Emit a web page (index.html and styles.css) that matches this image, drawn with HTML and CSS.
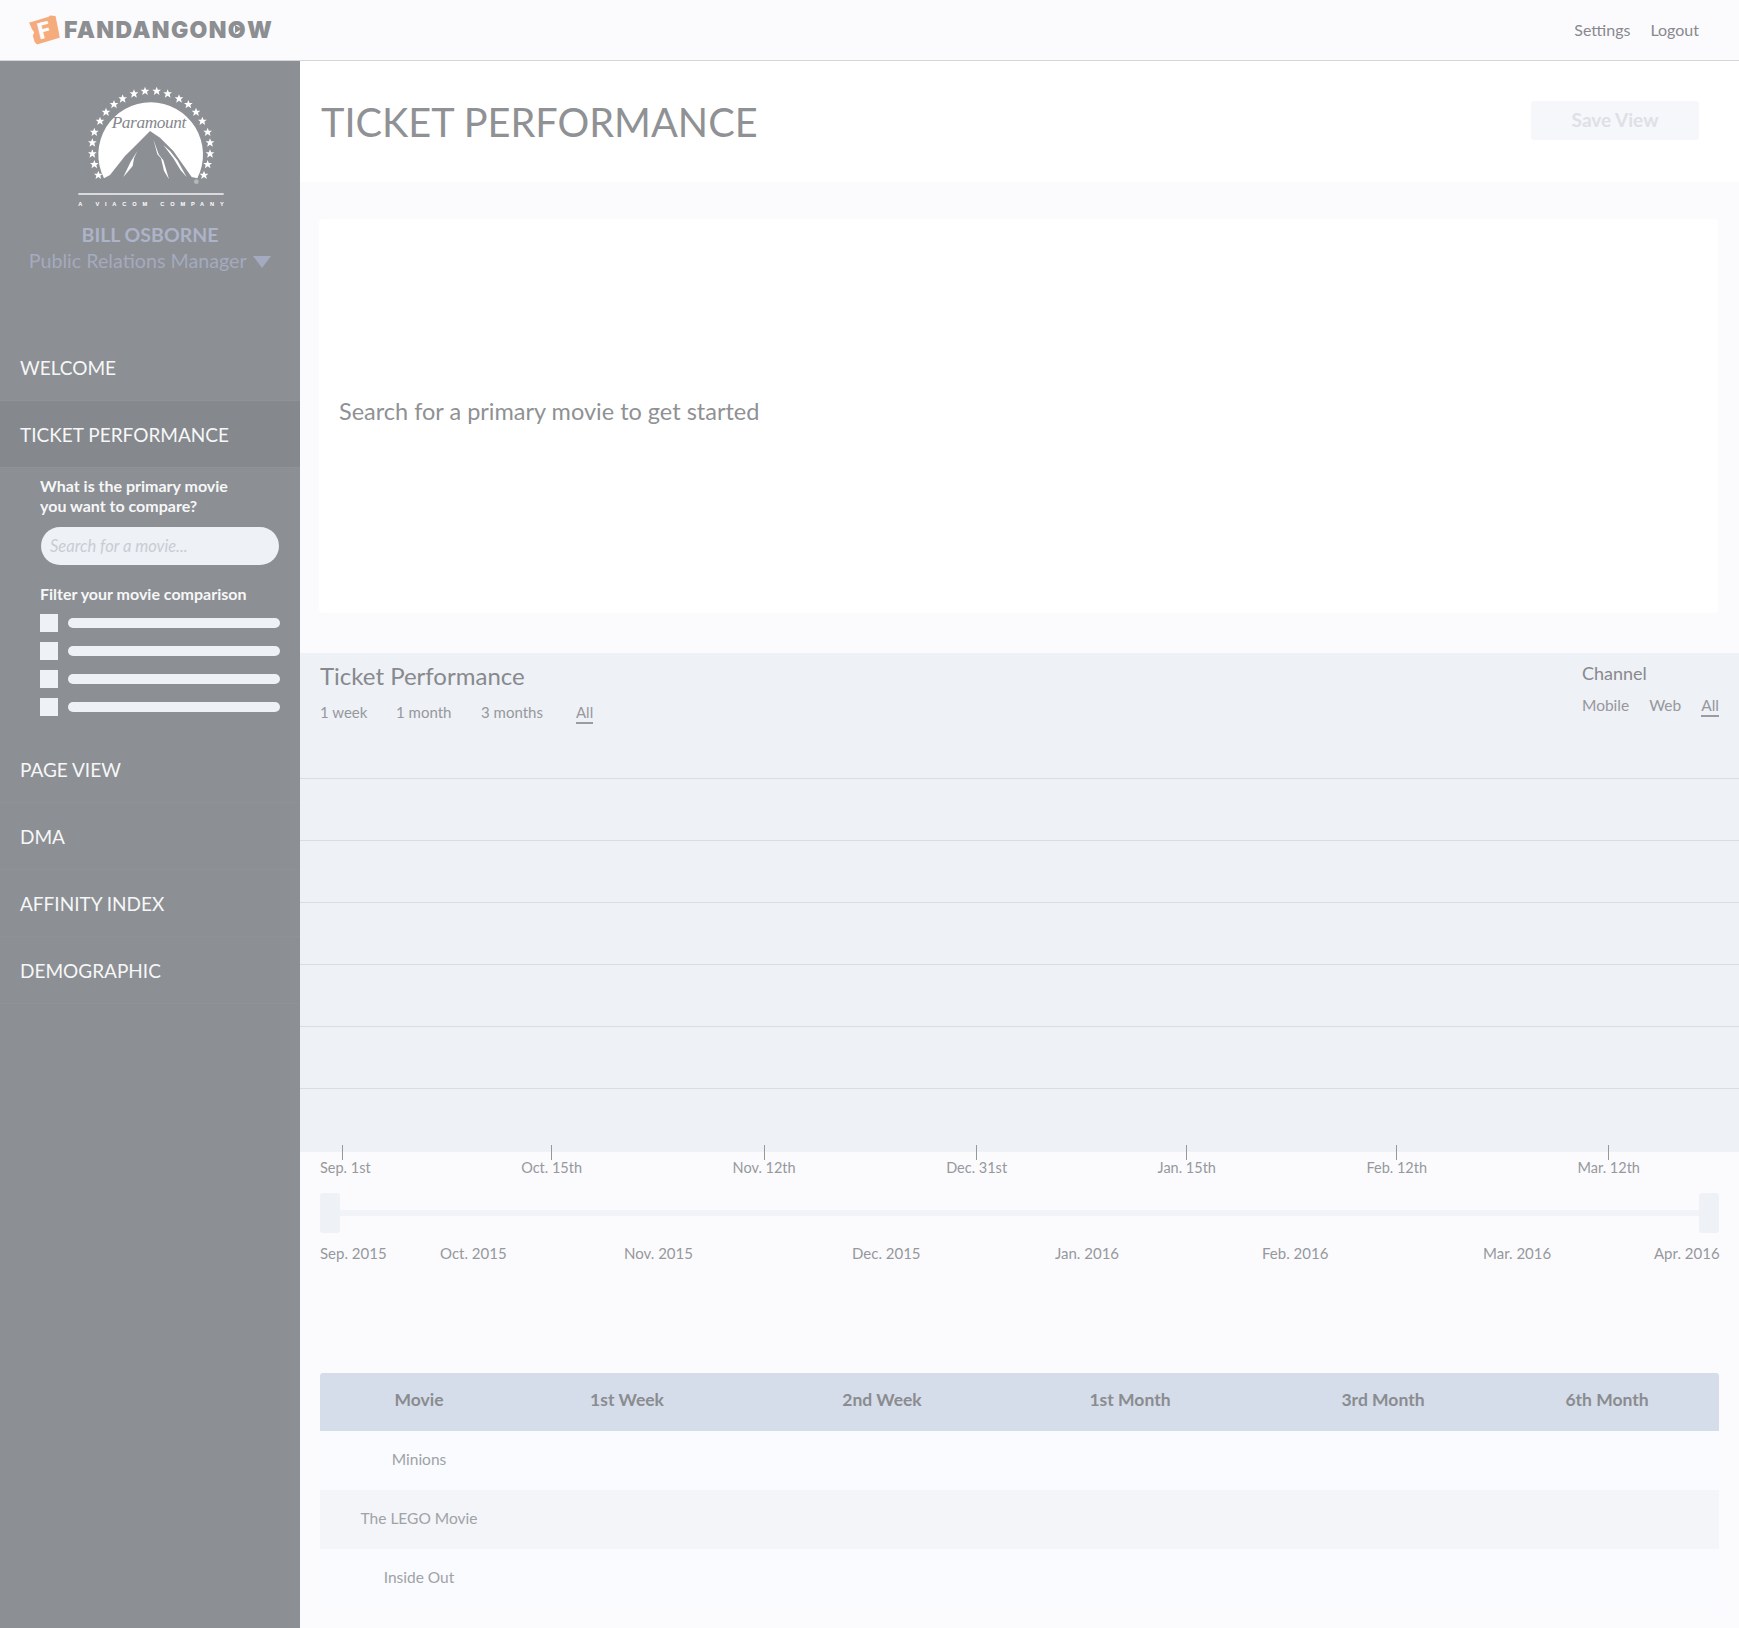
FILE: index.html
```html
<!DOCTYPE html>
<html lang="en">
<head>
  <meta charset="UTF-8"/>
  <title>Ticket Performance</title>
  <link rel="stylesheet" href="styles.css">
</head>
<body>

  <header class="topbar">
    <div class="brand">
      <svg class="brand-ticket" viewBox="0 0 93 87">
        <path d="M3 22 L10 20 L60 5 L64 1 L80 3 L90 52 L92 66 L26 86 L19 78 L14 60 L18 50 L12 42 Z" fill="#f5ab7c"/>
        <text x="28" y="68" transform="rotate(-14 45 45)" class="brand-f">F</text>
      </svg>
      <span class="brand-name">FANDANGON<span class="brand-play">O</span>W</span>
    </div>
    <nav class="toplinks">
      <a>Settings</a>
      <a>Logout</a>
    </nav>
  </header>

  <div class="layout">
    <aside class="sidebar">
      <div class="studio">
        <svg class="studio-logo" viewBox="0 0 540 450">
          <defs>
            <polygon id="star" points="0,-13 3.5,-4 13,-4 6,2 8.5,12 0,6 -8.5,12 -6,2 -13,-4 -3.5,-4"/>
          </defs>
          <g fill="#fff">
            <use href="#star" x="115" y="312"/><use href="#star" x="103" y="280"/>
            <use href="#star" x="97" y="248"/><use href="#star" x="97" y="215"/>
            <use href="#star" x="103" y="183"/><use href="#star" x="120" y="150"/>
            <use href="#star" x="138" y="123"/><use href="#star" x="162" y="100"/>
            <use href="#star" x="188" y="83"/><use href="#star" x="222" y="68"/>
            <use href="#star" x="255" y="60"/><use href="#star" x="290" y="60"/>
            <use href="#star" x="323" y="68"/><use href="#star" x="357" y="83"/>
            <use href="#star" x="385" y="100"/><use href="#star" x="408" y="123"/>
            <use href="#star" x="427" y="150"/><use href="#star" x="443" y="183"/>
            <use href="#star" x="450" y="215"/><use href="#star" x="450" y="248"/>
            <use href="#star" x="443" y="280"/><use href="#star" x="432" y="312"/>
            <path d="M132 322 A157 157 0 1 1 412 322 L395 318 L340 240 L300 200 L270 180 L235 215 L195 255 L150 312 Z"/>
            <path d="M280 205 L292 250 L303 262 L312 300 L327 325 L310 268 L296 250 Z"/>
            <path d="M310 222 L340 262 L362 298 L380 318 L352 268 L330 240 Z"/>
            <path d="M232 240 L212 272 L190 318 L218 285 L222 262 Z"/>
            <rect x="55" y="367" width="436" height="4"/>
          </g>
          <circle cx="409" cy="332" r="7" fill="#b5b8bb"/>
          <text x="155" y="172" class="studio-script" textLength="224">Paramount</text>
          <text x="55" y="404" class="studio-tag" textLength="436">A VIACOM COMPANY</text>
        </svg>
        <div class="user-name">BILL OSBORNE</div>
        <div class="user-role">Public Relations Manager <span class="caret"></span></div>
      </div>

      <nav class="menu">
        <a class="menu-item">WELCOME</a>
        <a class="menu-item active">TICKET PERFORMANCE</a>
        <div class="filters">
          <p class="filter-label">What is the primary movie<br>you want to compare?</p>
          <div class="search-pill">Search for a movie...</div>
          <p class="filter-label filter-title">Filter your movie comparison</p>
          <div class="check-row"><span class="check"></span><span class="check-bar"></span></div>
          <div class="check-row"><span class="check"></span><span class="check-bar"></span></div>
          <div class="check-row"><span class="check"></span><span class="check-bar"></span></div>
          <div class="check-row"><span class="check"></span><span class="check-bar"></span></div>
        </div>
        <a class="menu-item">PAGE VIEW</a>
        <a class="menu-item">DMA</a>
        <a class="menu-item">AFFINITY INDEX</a>
        <a class="menu-item">DEMOGRAPHIC</a>
      </nav>
    </aside>

    <main class="content">
      <div class="page-head">
        <h1>TICKET PERFORMANCE</h1>
        <button class="save-btn">Save View</button>
      </div>

      <section class="empty-card">Search for a primary movie to get started</section>

      <section class="chart">
        <div class="chart-head">
          <div>
            <h2>Ticket Performance</h2>
            <div class="ranges">
              <a>1 week</a>
              <a>1 month</a>
              <a>3 months</a>
              <a class="current">All</a>
            </div>
          </div>
          <div class="channel">
            <h3>Channel</h3>
            <div class="channel-links">
              <a>Mobile</a>
              <a>Web</a>
              <a class="current">All</a>
            </div>
          </div>
        </div>
        <div class="gridlines">
          <div></div><div></div><div></div><div></div><div></div><div></div>
        </div>
      </section>

      <div class="axis">
        <span>Sep. 1st</span>
        <span>Oct. 15th</span>
        <span>Nov. 12th</span>
        <span>Dec. 31st</span>
        <span>Jan. 15th</span>
        <span>Feb. 12th</span>
        <span>Mar. 12th</span>
      </div>

      <div class="slider">
        <span class="slider-handle"></span>
        <span class="slider-track"></span>
        <span class="slider-handle"></span>
      </div>

      <div class="months">
        <span>Sep. 2015</span>
        <span>Oct. 2015</span>
        <span>Nov. 2015</span>
        <span>Dec. 2015</span>
        <span>Jan. 2016</span>
        <span>Feb. 2016</span>
        <span>Mar. 2016</span>
        <span>Apr. 2016</span>
      </div>

      <div class="table">
        <div class="table-row table-head">
          <div>Movie</div>
          <div>1st Week</div>
          <div>2nd Week</div>
          <div>1st Month</div>
          <div>3rd Month</div>
          <div>6th Month</div>
        </div>
        <div class="table-row"><div>Minions</div></div>
        <div class="table-row striped"><div>The LEGO Movie</div></div>
        <div class="table-row"><div>Inside Out</div></div>
      </div>
    </main>
  </div>

</body>
</html>
```

FILE: styles.css
```css
:root {
  --ink: #88898d;
  --ink-soft: #96989c;
  --side: #8c8f93;
  --band: #eef1f6;
  --page: #fbfbfe;
}
* { box-sizing: border-box; margin: 0; padding: 0 }
body {
  background: var(--page);
  color: var(--ink);
  font-family: Lato, "Open Sans", sans-serif;
  font-size: 16px;
}

/* top bar */
.topbar {
  height: 61px;
  padding: 0 40px 0 28px;
  display: flex;
  justify-content: space-between;
  align-items: center;
  background: var(--page);
  border-bottom: 1px solid #d4d5d7;
}
.brand { display: flex; align-items: center; gap: 4px; }
.brand-ticket { width: 32px; height: 30px; }
.brand-f { font: 900 66px Roboto, sans-serif; fill: var(--page); }
.brand-name {
  font: 900 23px Inter, sans-serif;
  letter-spacing: 1.35px;
  color: #8c8e91;
}
.brand-play { position: relative; }
.brand-play::after {
  content: "";
  position: absolute;
  left: 7px; top: 9px;
  border-left: 7px solid #8c8e91;
  border-top: 4px solid transparent;
  border-bottom: 4px solid transparent;
}
.toplinks { display: flex; gap: 20px; margin-top: -2px; font-size: 16px; }

/* sidebar */
.layout { display: flex; min-height: 1567px; }
.sidebar {
  width: 300px;
  flex: none;
  background: var(--side);
}
.studio {
  height: 273px;
  padding-top: 10px;
  display: flex;
  flex-direction: column;
  align-items: center;
  text-align: center;
}
.studio-logo { width: 180px; height: 150px; flex: none; }
.studio-script {
  font: italic 52px "Liberation Serif", serif;
  fill: #85888c;
}
.studio-tag { font: 700 17px "Liberation Sans", sans-serif; fill: #fff; }
.user-name {
  margin-top: 2px;
  font-size: 19.5px;
  font-weight: 700;
  line-height: 24px;
  color: #adb3c8;
}
.user-role {
  margin-top: 1px;
  font-size: 19.7px;
  line-height: 26px;
  color: #a4aabf;
}
.caret {
  display: inline-block;
  margin-left: 2px;
  border-top: 12px solid #a4aabf;
  border-left: 9px solid transparent;
  border-right: 9px solid transparent;
}
.menu-item {
  display: flex;
  align-items: center;
  height: 67px;
  padding-left: 20px;
  font-size: 19px;
  color: #f6f7f8;
  border-bottom: 1px solid #8f9296;
}
.menu-item.active { background: #85888c; }
.filters {
  height: 268px;
  padding: 8px 20px 0 40px;
}
.filter-label {
  font-size: 16px;
  font-weight: 700;
  line-height: 20px;
  color: #f6f7f8;
}
.filter-title { margin-top: 19px; margin-bottom: 10px; }
.search-pill {
  height: 38px;
  margin: 11px 1px 0 1px;
  padding-left: 9px;
  display: flex;
  align-items: center;
  background: var(--band);
  border-radius: 19px;
  font-size: 16.5px;
  font-style: italic;
  color: #c9ccd3;
}
.check-row {
  display: flex;
  align-items: center;
  gap: 10px;
  height: 18px;
  margin-bottom: 10px;
}
.check { width: 18px; height: 18px; background: var(--band); }
.check-bar { flex: 1; height: 10px; background: var(--band); border-radius: 5px; }

/* main column */
.content { flex: 1; min-width: 0; padding-bottom: 20px; }
.page-head {
  height: 121px;
  padding: 0 40px 0 21px;
  display: flex;
  justify-content: space-between;
  align-items: center;
  background: #fff;
}
h1 {
  font-size: 39.7px;
  font-weight: 400;
  color: #8f9194;
}
.save-btn {
  width: 168px;
  height: 39px;
  margin-bottom: 3px;
  padding-bottom: 2px;
  border: none;
  border-radius: 3px;
  background: #f5f7fa;
  color: #dde0e6;
  font: 700 19px Lato, sans-serif;
}
.empty-card {
  height: 394px;
  margin: 37px 21px 40px 19px;
  padding: 0 0 11px 20px;
  display: flex;
  align-items: center;
  background: #fff;
  border-radius: 4px;
  font-size: 23.5px;
  color: #8f9194;
}

/* chart */
.chart {
  height: 499px;
  background: var(--band);
}
.chart-head {
  height: 125px;
  padding: 8px 20px 0 20px;
  display: flex;
  justify-content: space-between;
}
h2 { font-size: 24px; font-weight: 400; line-height: 29px; }
h3 { font-size: 18px; font-weight: 400; line-height: 22px; }
.ranges {
  display: flex;
  margin-top: 13px;
  font-size: 15px;
  color: var(--ink-soft);
}
.ranges a:nth-child(1) { width: 76px; }
.ranges a:nth-child(2) { width: 85px; }
.ranges a:nth-child(3) { width: 95px; }
.channel { width: 137px; padding-top: 1px; }
.channel-links {
  display: flex;
  gap: 20px;
  margin-top: 12px;
  font-size: 15.5px;
  color: var(--ink-soft);
}
.current { border-bottom: 2px solid #9a9ca1; padding-bottom: 1px; }
.gridlines div {
  height: 62px;
  border-top: 1px solid #d9dce1;
}

.axis {
  display: flex;
  justify-content: space-between;
  margin-top: -7px;
  padding: 0 99px 0 20px;
  font-size: 14.5px;
  line-height: 18px;
  color: var(--ink-soft);
}
.axis span {
  display: flex;
  flex-direction: column;
  align-items: center;
}
.axis span::before {
  content: "";
  width: 1px;
  height: 15px;
  margin-bottom: -1px;
  background: #96989c;
}
.axis span:first-child::before { align-self: flex-start; margin-left: 22px; }

.slider {
  display: flex;
  align-items: center;
  margin: 16px 20px 0 20px;
}
.slider-handle {
  width: 20px;
  height: 40px;
  background: #eef1f6;
  border-radius: 3px;
}
.slider-track { flex: 1; height: 6px; background: #f1f3f8; }

.months {
  display: grid;
  grid-template-columns: 120px 184px 228px 203px 207px 221px 171px auto;
  margin: 11px 20px 0 20px;
  font-size: 15px;
  line-height: 19px;
  white-space: nowrap;
  color: var(--ink-soft);
}

/* table */
.table { margin: 110px 20px 0 20px; }
.table-row {
  display: grid;
  grid-template-columns: 198px 218px 292px 204px 302px 146px;
  height: 59px;
  padding-bottom: 3px;
  align-items: center;
  text-align: center;
  font-size: 15.5px;
  background: #f9fbfe;
  color: #a0a2a6;
}
.table-row.striped { background: #f3f5f9; }
.table-head {
  height: 58px;
  padding-bottom: 5px;
  background: #d5dcea;
  border-radius: 3px 3px 0 0;
  font-size: 17.5px;
  font-weight: 700;
  color: #8a8c90;
}
```
